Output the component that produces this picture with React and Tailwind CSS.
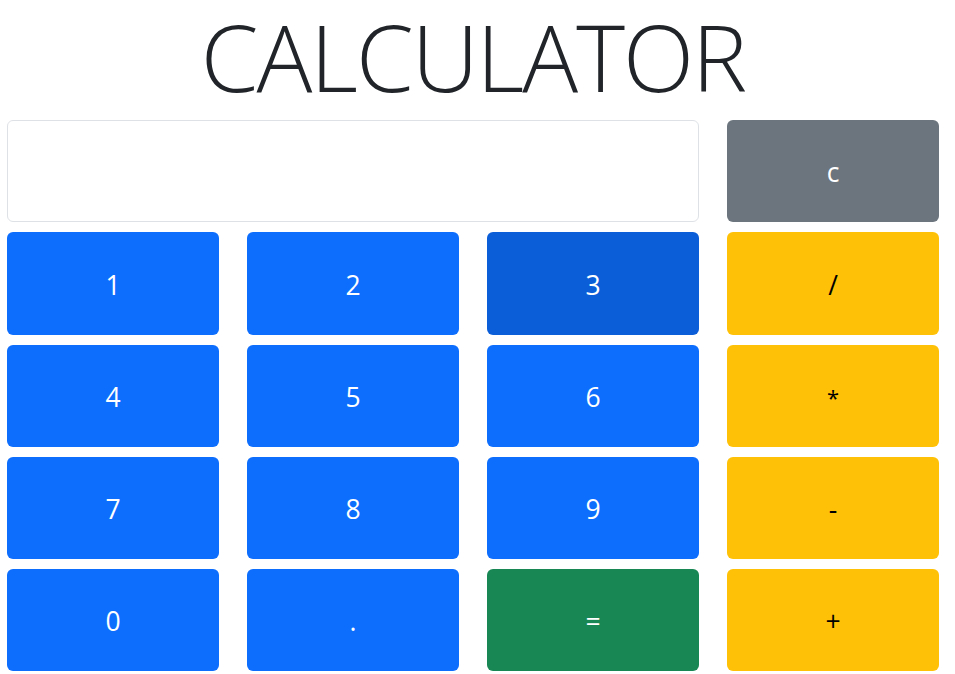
export default function App() {
  const btn = "flex items-center justify-center rounded-[6px] h-[102.25px] text-[26.5px] leading-none pt-[3px]";
  const blue = `${btn} bg-[#0d6efd] text-white`;
  const yellow = `${btn} bg-[#ffc107] text-[#000]`;
  return (
    <div className="w-[955px] bg-white" style={{ fontFamily: '"Open Sans", "Noto Sans", sans-serif' }}>
      <div className="h-[120px] pt-[1px] pr-[9px]">
        <h1 className="text-center text-[93px] font-light leading-[1.2] text-[#212529] tracking-[-2px]">CALCULATOR</h1>
      </div>
      <div className="grid grid-cols-[212px_212px_212px_212px] gap-x-[28px] gap-y-[10px] pl-[7px]">
        <div className="col-span-3 h-[102.25px] rounded-[6px] border border-[#dee2e6] bg-white"></div>
        <div className={`${btn} bg-[#6c757d] text-white`}>c</div>
        <div className={blue}>1</div>
        <div className={blue}>2</div>
        <div className={`${btn} bg-[#0b5ed7] text-white`}>3</div>
        <div className={yellow}>/</div>
        <div className={blue}>4</div>
        <div className={blue}>5</div>
        <div className={blue}>6</div>
        <div className={yellow}><span className="text-[22px]">*</span></div>
        <div className={blue}>7</div>
        <div className={blue}>8</div>
        <div className={blue}>9</div>
        <div className={yellow}>-</div>
        <div className={blue}>0</div>
        <div className={blue}>.</div>
        <div className={`${btn} bg-[#198754] text-white`}>=</div>
        <div className={yellow}>+</div>
      </div>
    </div>
  );
}
